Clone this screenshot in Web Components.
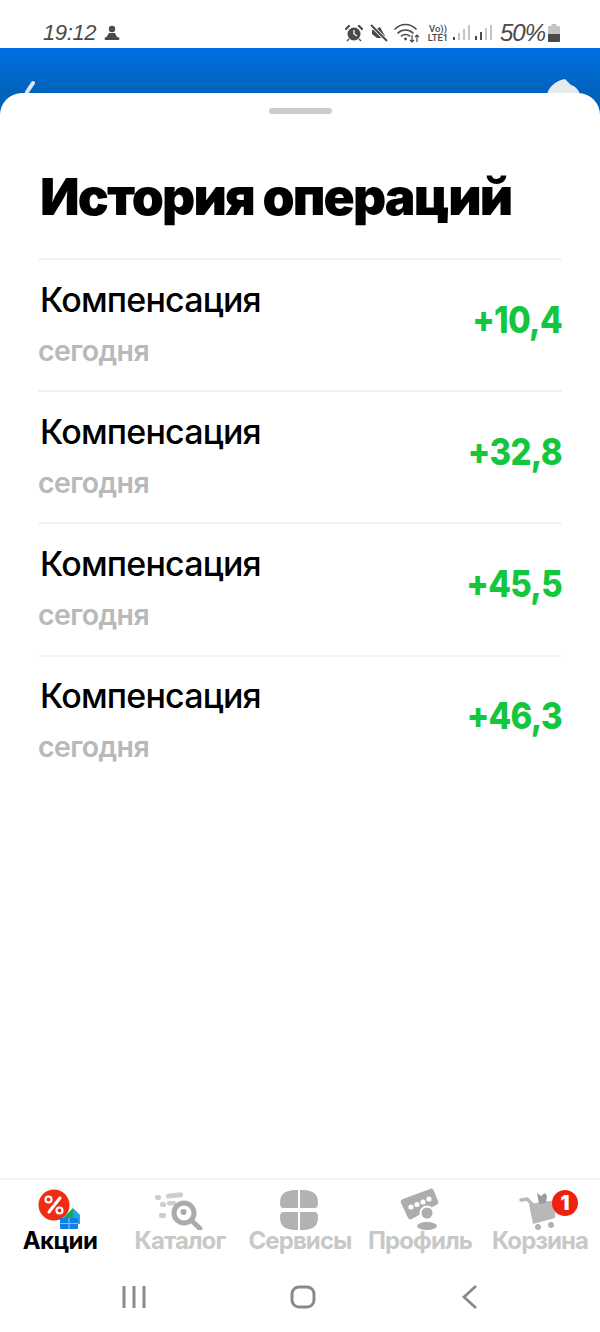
<!DOCTYPE html>
<html lang="ru"><head><meta charset="utf-8"><title>История операций</title>
<style>
html,body{margin:0;padding:0;background:#fff}
body{width:600px;height:1332px;overflow:hidden;font-family:Inter,"Noto Sans",sans-serif}
</style></head><body>
<app-screen>
  <status-bar slot="status"></status-bar>
  <blue-header slot="header"></blue-header>
  <history-sheet slot="sheet">
    <op-row title="Компенсация" date="сегодня" amount="+10,4"></op-row>
    <op-row title="Компенсация" date="сегодня" amount="+32,8"></op-row>
    <op-row title="Компенсация" date="сегодня" amount="+45,5"></op-row>
    <op-row title="Компенсация" date="сегодня" amount="+46,3"></op-row>
  </history-sheet>
  <tab-bar slot="tabs">
    <tab-item label="Акции" active>
      <svg viewBox="0 0 60 48" width="60" height="48"><circle cx="24" cy="23" r="15.500" fill="#ee2d12"/><path d="M19 30 30 16" stroke="#fff" stroke-width="3" stroke-linecap="round"/><circle cx="18.500" cy="17.500" r="3" fill="none" stroke="#fff" stroke-width="2.200"/><circle cx="29.500" cy="28.500" r="3" fill="none" stroke="#fff" stroke-width="2.200"/><path d="M32 37l6-6 5-5 1 11z" fill="#13a85a"/><path d="M43 26l7 7v9h-6l-1-5z" fill="#22a7e0"/><rect x="30" y="36" width="18" height="11" rx="1" fill="#0f7fe6"/><path d="M30 41.500h18M39 36v11" stroke="#7fc0f8" stroke-width="1.200"/></svg>
    </tab-item>
    <tab-item label="Каталог">
      <svg viewBox="0 0 60 48" width="60" height="48"><g fill="#cdcdcd"><rect x="5" y="13" width="6" height="5" rx="2"/><rect x="16" y="11" width="17" height="5" rx="2" transform="rotate(-6 24 13)"/><rect x="10" y="20" width="6" height="5" rx="2"/><rect x="17" y="19" width="9" height="4.500" rx="2"/><rect x="9" y="31" width="7" height="5" rx="2"/></g><circle cx="34" cy="31" r="10" fill="#fff" stroke="#ababab" stroke-width="5"/><circle cx="33.500" cy="30" r="3" fill="#ababab"/><path d="M42 39l8 7.500" stroke="#ababab" stroke-width="5" stroke-linecap="round"/></svg>
    </tab-item>
    <tab-item label="Сервисы">
      <svg viewBox="0 0 60 48" width="60" height="48"><g fill="#b2b2b2"><path d="M28 8c-11 0-18 2-18 13 0 3 1 5 3 5h15z"/><path d="M30 8c11 0 18 2 18 13 0 3-1 5-3 5H30z"/><path d="M28 30v18c-11 0-18-2-18-13 0-3 1-5 3-5z"/><path d="M30 30v18c11 0 18-2 18-13 0-3-1-5-3-5z"/></g></svg>
    </tab-item>
    <tab-item label="Профиль">
      <svg viewBox="0 0 60 48" width="60" height="48"><path d="M11 21c-1-2 0-3 2-4L40 7c2-1 3 0 4 2l4 10c1 2 0 3-2 4L22 37c-2 1-3 0-4-1z" fill="#adadad"/><g fill="#fff"><circle cx="21" cy="25" r="2.600"/><circle cx="27" cy="22.500" r="2.600"/><circle cx="33" cy="20" r="2.600"/><circle cx="39" cy="17" r="2.600"/></g><circle cx="37" cy="31" r="6.500" fill="#adadad" stroke="#fff" stroke-width="2"/><ellipse cx="37" cy="44" rx="10" ry="4" fill="#adadad"/></svg>
    </tab-item>
    <tab-item label="Корзина">
      <svg viewBox="0 0 60 48" width="60" height="48"><path d="M11 18l6-1 5 5" fill="none" stroke="#b8b8b8" stroke-width="3.500" stroke-linecap="round"/><path d="M19 22l27-4-1 18-22 6z" fill="#b8b8b8"/><path d="M27 11l4 3 4-3 2 3-1 7-7 1z" fill="#9c9c9c"/><circle cx="28" cy="45" r="3" fill="#b2b2b2"/><circle cx="41" cy="43" r="3" fill="#b2b2b2"/></svg>
      <span slot="badge">1</span>
    </tab-item>
  </tab-bar>
  <nav-buttons slot="nav"></nav-buttons>
</app-screen>
<script>
function def(name,html,init){customElements.define(name,class extends HTMLElement{connectedCallback(){if(this.shadowRoot)return;const r=this.attachShadow({mode:'open'});r.innerHTML=html;if(init)init(this,r);}});}
def('app-screen',`<style>:host{display:flex;flex-direction:column;width:600px;height:1332px;background:#fff;overflow:hidden}
.mid{flex:1;display:flex;flex-direction:column;min-height:0}</style>
<slot name="status"></slot><div class="mid"><slot name="header"></slot><slot name="sheet"></slot></div><slot name="tabs"></slot><slot name="nav"></slot>`);
def('status-bar',`<style>:host{display:flex;align-items:center;justify-content:space-between;height:48px;padding:18px 40px 0 43px;color:#4a4a4a;box-sizing:border-box;flex:none}
.l,.r{display:flex;align-items:center}
.t{font:italic 400 22px "Liberation Sans",sans-serif;letter-spacing:-.4px;width:52px;white-space:nowrap}
.p{font:italic 400 24px "Liberation Sans",sans-serif;letter-spacing:-1px;width:45px;margin-left:8px;white-space:nowrap}
.lte{font:500 9.500px/9px Roboto,sans-serif;text-align:center;margin:0 1px 0 0;width:22px}
svg{display:block;flex:none}</style>
<div class="l"><span class="t">19:12</span><svg width="16" height="18" viewBox="0 0 16 18" style="margin-left:9px"><circle cx="8" cy="5" r="3.200" fill="#4a4a4a"/><path d="M5 9h6l2 4c2 0 3 1 2 3H1c-1-2 0-3 1.500-3z" fill="#4a4a4a"/></svg></div>
<div class="r">
<svg width="18" height="18" viewBox="0 0 18 18" style="margin-right:7px"><circle cx="9" cy="10" r="6.500" fill="#4a4a4a"/><path d="M9 6v4l3 2" stroke="#fff" stroke-width="1.300" fill="none"/><path d="M1 5l3-3M17 5l-3-3" stroke="#4a4a4a" stroke-width="2.200" stroke-linecap="round"/><path d="M4 15l-2 2M14 15l2 2" stroke="#4a4a4a" stroke-width="1.500"/></svg>
<svg width="18" height="18" viewBox="0 0 18 18" style="margin-right:6px"><path d="M2 6h3l5-3 5 9v1l-5 1H7L2 10z" fill="#4a4a4a"/><path d="M2 2l15 15" stroke="#fff" stroke-width="3.500"/><path d="M1 1l16 16" stroke="#4a4a4a" stroke-width="2"/></svg>
<svg width="26" height="20" viewBox="0 0 26 20" style="margin-right:7px"><g fill="none" stroke="#4a4a4a" stroke-width="1.700" stroke-linecap="round"><path d="M1 6c6-6 15-6 21 0"/><path d="M4 10c4-4 11-4 15 0"/><path d="M7.500 13c2-2 6-2 8 0"/></g><circle cx="11.500" cy="16" r="1.400" fill="#4a4a4a"/><path d="M18 12v7M16 17l2 2 2-2M23 19v-7M21 14l2-2 2 2" stroke="#4a4a4a" stroke-width="1.200" fill="none"/></svg>
<div class="lte">Vo))<br>LTE1</div>
<svg width="17" height="18" viewBox="0 0 17 18" style="margin:0 0 0 3px"><rect x="0" y="13" width="2" height="3" fill="#4a4a4a"/><rect x="5" y="9" width="2" height="7" fill="#c4c4c4"/><rect x="10" y="5" width="2" height="11" fill="#c4c4c4"/><rect x="15" y="1" width="2" height="15" fill="#c4c4c4"/></svg>
<svg width="17" height="18" viewBox="0 0 17 18" style="margin:0 0 0 5px"><rect x="0" y="12" width="2" height="4" fill="#4a4a4a"/><rect x="5" y="8" width="2" height="8" fill="#4a4a4a"/><rect x="10" y="4" width="2" height="12" fill="#c4c4c4"/><rect x="15" y="1" width="2" height="15" fill="#c4c4c4"/></svg>
<span class="p">50%</span>
<svg width="12" height="18" viewBox="0 0 12 18" style="margin-left:3px"><path d="M3.500 0h5v2H11a1 1 0 0 1 1 1v14a1 1 0 0 1-1 1H1a1 1 0 0 1-1-1V3a1 1 0 0 1 1-1h2.500z" fill="#c4c4c4"/><path d="M0 10h12v7a1 1 0 0 1-1 1H1a1 1 0 0 1-1-1z" fill="#4a4a4a"/></svg>
</div>`);
def('blue-header',`<style>:host{display:block;height:73px;background:linear-gradient(#0071e3,#0062bb 45px,#005fb2);position:relative;flex:none;overflow:hidden}
svg{position:absolute;top:0;display:block}</style>
<svg style="left:22px" width="30" height="45" viewBox="0 0 30 45"><path d="M11 35l-6 9" stroke="#dfe6ec" stroke-width="4" stroke-linecap="round"/></svg>
<svg style="left:544px" width="44" height="45" viewBox="0 0 44 45"><path d="M3 46C5 38 12 34 17 32L21 31L27 37C31 38 34 41 36 46Z" fill="#e8ebee"/></svg>`);
def('history-sheet',`<style>:host{display:block;flex:1;min-height:0;background:#fff;border-radius:22px 22px 0 0;margin-top:-28px;padding:15px 38px 0;box-sizing:border-box;position:relative}
.h{width:63px;height:6px;border-radius:3px;background:#cbcbcb;margin:0 auto}
h1{margin:0;font:900 51.500px/70px Inter,sans-serif;color:#000;letter-spacing:-1.850px;padding:47px 0 0 2px;white-space:nowrap;height:97px}
</style><div class="h"></div><h1>История операций</h1><slot></slot>`);
def('op-row',`<style>:host{display:flex;align-items:center;justify-content:space-between;height:132.200px;box-sizing:border-box;border-top:2px solid #f3f3f3}
.a{padding:0 0 2px 2px}.t{font:500 34px/40px Inter,sans-serif;color:#000;letter-spacing:-.8px}
.d{font:600 28.500px/36px Inter,sans-serif;color:#b9b9b9;letter-spacing:-.6px;margin:13px 0 0 -2px}
.m{font:800 33px/40px Inter,sans-serif;color:#14c63e;letter-spacing:-.7px;padding-bottom:11px;transform:scaleY(1.13)}</style>
<div class="a"><div class="t"></div><div class="d"></div></div><div class="m"></div>`,(h,r)=>{
r.querySelector('.t').textContent=h.getAttribute('title');h.removeAttribute('title');r.querySelector('.d').textContent=h.getAttribute('date');r.querySelector('.m').textContent=h.getAttribute('amount');});
def('tab-bar',`<style>:host{display:grid;grid-template-columns:repeat(5,120px);height:90px;border-top:2px solid #f5f5f5;flex:none}</style><slot></slot>`);
def('tab-item',`<style>:host{display:flex;flex-direction:column;align-items:center;padding-top:2px}
.ic{height:48px;width:60px;position:relative}
.lb{font:700 24px/28px Inter,sans-serif;color:#c8c8c8;letter-spacing:-.9px;margin-top:-3px;white-space:nowrap}
:host([active]) .lb{color:#000;letter-spacing:-.6px}
.b{position:absolute;top:8px;right:-8px;width:26px;height:26px;border-radius:50%;display:none;align-items:center;justify-content:center;font:900 20px/26px Inter,sans-serif;color:#fff;background:#ee2110}
:host([badge]) .b{display:flex}
</style><div class="ic"><slot></slot><div class="b"><slot name="badge"></slot></div></div><div class="lb"></div>`,(h,r)=>{r.querySelector('.lb').textContent=h.getAttribute('label');if(h.querySelector('[slot=badge]'))h.setAttribute('badge','');});
def('nav-buttons',`<style>:host{display:grid;grid-template-columns:170px 168px 166px;justify-content:start;padding-left:49px;height:54px;align-items:center;flex:none;padding-bottom:8px}
svg{display:block;margin:auto}</style>
<svg width="26" height="24" viewBox="0 0 26 24"><path d="M3 1v22M13 1v22M23 1v22" stroke="#8a8a8a" stroke-width="3"/></svg>
<svg width="26" height="24" viewBox="0 0 26 24"><rect x="2" y="2" width="22" height="20" rx="7" fill="none" stroke="#8a8a8a" stroke-width="3"/></svg>
<svg width="18" height="26" viewBox="0 0 18 26"><path d="M15 2L3 13l12 11" fill="none" stroke="#8a8a8a" stroke-width="2.800"/></svg>`);
</script>
</body></html>
